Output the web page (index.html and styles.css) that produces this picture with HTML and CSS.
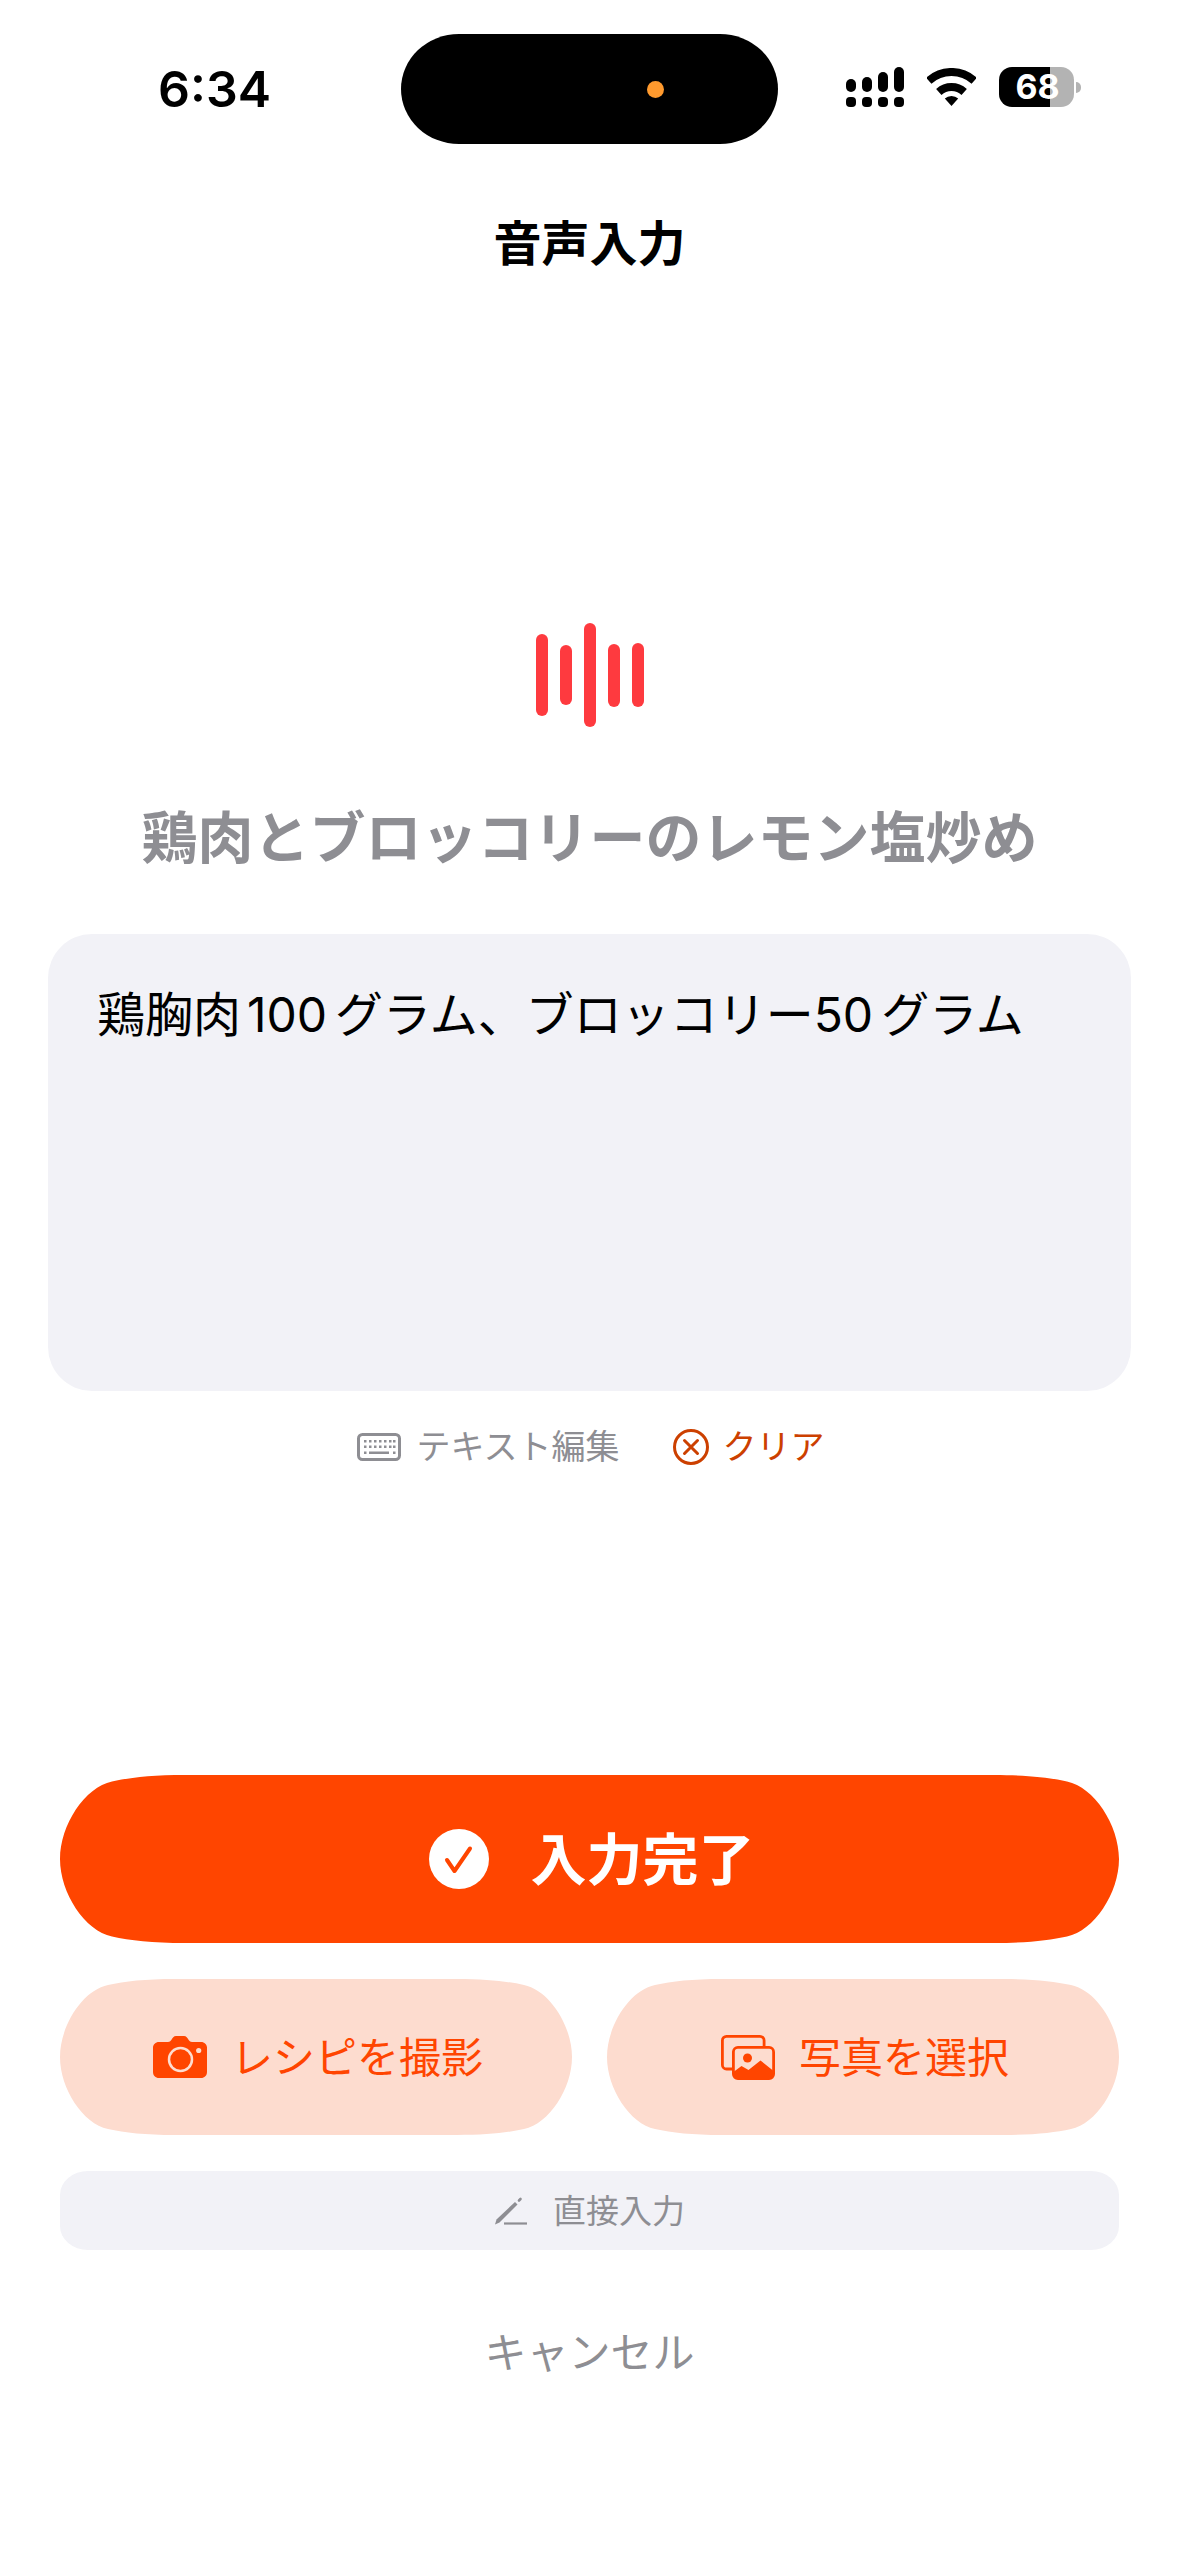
FILE: index.html
```html
<!DOCTYPE html>
<html lang="ja">
<head>
    <meta charset="UTF-8">
    <meta name="viewport" content="width=device-width, initial-scale=1.0">
    <title>音声入力</title>
    <link rel="stylesheet" href="styles.css">
</head>
<body>
    <div class="page">
        <div class="status-bar">
            <div class="time">6:34</div>
            <div class="island"><span class="island-dot"></span></div>
            <div class="status-icons">
                <div class="signal">
                    <span class="sig sig1"></span><span class="sig sig2"></span><span class="sig sig3"></span><span class="sig sig4"></span>
                    <span class="sig-dot"></span><span class="sig-dot"></span><span class="sig-dot"></span><span class="sig-dot"></span>
                </div>
                <svg class="wifi" viewBox="0 0 49 38" fill="none" stroke="#000" stroke-width="8">
                    <path d="M1.750 12.700A34 34 0 0 1 47.250 12.700"/>
                    <path d="M11.800 23.900A19 19 0 0 1 37.200 23.900"/>
                    <path d="M24.500 38L17.800 30.600A10 10 0 0 1 31.200 30.600Z" fill="#000" stroke="none"/>
                </svg>
                <div class="battery">
                    <div class="battery-body">68</div>
                    <span class="battery-nub"></span>
                </div>
            </div>
        </div>

        <h1 class="title">音声入力</h1>

        <div class="wave">
            <span class="bar bar1"></span>
            <span class="bar bar2"></span>
            <span class="bar bar3"></span>
            <span class="bar bar4"></span>
            <span class="bar bar5"></span>
        </div>

        <h2 class="recipe">鶏肉とブロッコリーのレモン塩炒め</h2>

        <div class="voice-box">鶏胸肉<span class="num num-first">100</span>グラム、ブロッコリー<span class="num">50</span>グラム</div>

        <div class="tools">
            <div class="tool">
                <svg class="kb-icon" viewBox="0 0 44 28" fill="#8e8e93">
                    <rect x="1.500" y="1.500" width="41" height="25" rx="4" fill="none" stroke="#8e8e93" stroke-width="3"/>
                    <g>
                        <rect x="7" y="7" width="2.500" height="2.500"/><rect x="12" y="7" width="2.500" height="2.500"/><rect x="17" y="7" width="2.500" height="2.500"/><rect x="22" y="7" width="2.500" height="2.500"/><rect x="27" y="7" width="2.500" height="2.500"/><rect x="32" y="7" width="2.500" height="2.500"/><rect x="36" y="7" width="2.500" height="2.500"/>
                        <rect x="7" y="12.500" width="2.500" height="2.500"/><rect x="12" y="12.500" width="2.500" height="2.500"/><rect x="17" y="12.500" width="2.500" height="2.500"/><rect x="22" y="12.500" width="2.500" height="2.500"/><rect x="27" y="12.500" width="2.500" height="2.500"/><rect x="32" y="12.500" width="2.500" height="2.500"/><rect x="36" y="12.500" width="2.500" height="2.500"/>
                        <rect x="7" y="18.500" width="2.500" height="2.500"/><rect x="12" y="18.500" width="20" height="2.500"/><rect x="36" y="18.500" width="2.500" height="2.500"/>
                    </g>
                </svg>
                <span>テキスト編集</span>
            </div>
            <div class="tool tool-clear">
                <svg class="clear-icon" viewBox="0 0 36 36" fill="none" stroke="#cc4000" stroke-width="3">
                    <circle cx="18" cy="18" r="16.500"/>
                    <path d="M11.500 11.500L24.500 24.500M24.500 11.500L11.500 24.500" stroke-linecap="round"/>
                </svg>
                <span>クリア</span>
            </div>
        </div>

        <div class="actions">
            <button class="btn-done">
                <svg class="check-icon" viewBox="0 0 60 60">
                    <circle cx="30" cy="30" r="30" fill="#fff"/>
                    <path d="M18 31L25.500 42L41 19.500" fill="none" stroke="#ff4500" stroke-width="4" stroke-linecap="round" stroke-linejoin="round"/>
                </svg>
                <span>入力完了</span>
            </button>

            <div class="btn-row">
                <button class="btn-soft">
                    <svg class="camera-icon" viewBox="0 0 54 42">
                        <path fill="#ff4500" d="M6 6h9c1.500 0 2.500-.8 3.300-2C19.500 2 20.800 0 23 0h8c2.200 0 3.500 2 4.700 4 .8 1.200 1.800 2 3.300 2h9c3.500 0 6 2.500 6 5.500V36c0 3.500-2.500 6-6 6H6c-3.500 0-6-2.500-6-6V11.500C0 8.500 2.500 6 6 6Z"/>
                        <circle cx="27.500" cy="23.500" r="11.500" fill="none" stroke="#fddccf" stroke-width="2.500"/>
                        <circle cx="45.700" cy="14.500" r="2.600" fill="#fddccf"/>
                    </svg>
                    <span>レシピを撮影</span>
                </button>
                <button class="btn-soft">
                    <svg class="photos-icon" viewBox="0 0 54 45" fill="none" stroke="#ff4500" stroke-width="2.800">
                        <path d="M11 34H5.500a4.100 4.100 0 0 1-4.100-4.100V5.500A4.100 4.100 0 0 1 5.500 1.400H39a4.100 4.100 0 0 1 4.100 4.100V11"/>
                        <rect x="12.400" y="12.400" width="40.200" height="31.200" rx="4.500"/>
                        <circle cx="26.500" cy="23" r="4.500" fill="#ff4500" stroke="none"/>
                        <path fill="#ff4500" stroke="none" d="M12.400 37L20.500 31L27.500 35L39.500 25.500L52.600 36V40a4 4 0 0 1-4 4H16.400a4 4 0 0 1-4-4Z"/>
                    </svg>
                    <span>写真を選択</span>
                </button>
            </div>

            <button class="btn-direct">
                <svg class="pen-icon" viewBox="0 0 33 28" fill="none" stroke="#8e8e93">
                    <path d="M1 27.500L2.500 22.500L21 5L23.500 7.500L5.500 25.500Z" fill="#8e8e93" stroke="none"/>
                    <path d="M10 26.500H33" stroke-width="2.200"/>
                    <path d="M25 3.500L26.500 2" stroke-width="2.600" stroke-linecap="round"/>
                </svg>
                <span>直接入力</span>
            </button>

            <div class="cancel">キャンセル</div>
        </div>
    </div>
</body>
</html>
```

FILE: styles.css
```css
* {
    box-sizing: border-box;
}
body {
    margin: 0;
    background: #fff;
    color: #000;
    font-family: Inter, "Noto Sans CJK JP", sans-serif;
}
button {
    border: none;
    font-family: inherit;
    padding: 0;
}
.page {
    display: flex;
    flex-direction: column;
    height: 2556px;
    padding-bottom: 173px;
}

/* status bar */
.status-bar {
    display: flex;
    align-items: center;
    height: 110px;
    margin-top: 34px;
    padding-left: 158px;
}
.time {
    width: 243px;
    font-size: 50px;
    font-weight: 600;
    line-height: 110px;
}
.island {
    display: flex;
    align-items: center;
    justify-content: flex-end;
    width: 377px;
    height: 110px;
    padding-right: 114px;
    background: #000;
    border-radius: 58px / 55px;
}
.island-dot {
    width: 17px;
    height: 17px;
    border-radius: 50%;
    background: #ff9a2e;
}
.status-icons {
    display: flex;
    align-items: center;
    gap: 23px;
    margin-left: 68px;
    margin-bottom: 4px;
}
.signal {
    display: grid;
    grid-template-columns: repeat(4, 10px);
    grid-template-rows: 25px 10px;
    column-gap: 6px;
    row-gap: 5px;
    align-items: end;
}
.sig {
    width: 10px;
    background: #000;
    border-radius: 5px;
}
.sig1 { height: 13px; }
.sig2 { height: 15px; }
.sig3 { height: 20px; }
.sig4 { height: 25px; }
.sig-dot {
    width: 10px;
    height: 10px;
    background: #000;
    border-radius: 4px;
}
.wifi {
    width: 49px;
    height: 38px;
}
.battery {
    display: flex;
    align-items: center;
    gap: 2px;
}
.battery-body {
    width: 75px;
    height: 40px;
    border-radius: 13px;
    background: linear-gradient(to right, #000 51px, #b3b3b3 51px);
    color: #fff;
    font-size: 34px;
    font-weight: 700;
    line-height: 40px;
    text-align: center;
    padding-left: 2px;
}
.battery-nub {
    width: 5px;
    height: 11px;
    background: #b3b3b3;
    border-radius: 0 6px 6px 0;
}

/* main content */
.title {
    margin: 70px 0 0;
    font-size: 48px;
    font-weight: 700;
    line-height: 60px;
    text-align: center;
}
.wave {
    display: flex;
    align-items: center;
    justify-content: center;
    gap: 12px;
    height: 104px;
    margin-top: 349px;
}
.bar {
    width: 12px;
    border-radius: 6px;
    background: #fe3a3f;
}
.bar1 { height: 82px; }
.bar2 { height: 60px; }
.bar3 { height: 104px; }
.bar4 { height: 63px; }
.bar5 { height: 64px; }
.recipe {
    margin: 76px 0 0;
    color: #8e8e93;
    font-size: 56px;
    font-weight: 700;
    line-height: 70px;
    text-align: center;
}
.voice-box {
    height: 457px;
    margin: 61px 48px 0;
    padding: 46px 49px;
    background: #f2f2f7;
    border-radius: 44px;
    font-size: 48px;
    line-height: 70px;
}
.num {
    margin-right: 8px;
}
.num-first {
    margin-left: 6px;
}
.tools {
    display: flex;
    justify-content: center;
    gap: 54px;
    margin-top: 36px;
    padding-left: 2px;
    color: #8e8e93;
    font-size: 34px;
    line-height: 40px;
}
.tool {
    display: flex;
    align-items: center;
    gap: 16px;
}
.tool-clear {
    gap: 13px;
    color: #cc4000;
}
.kb-icon {
    width: 44px;
    height: 28px;
}
.clear-icon {
    width: 36px;
    height: 36px;
}

/* buttons */
.actions {
    display: flex;
    flex-direction: column;
    margin-top: auto;
    padding: 0 60px;
}
.btn-done {
    display: flex;
    align-items: center;
    justify-content: center;
    gap: 42px;
    height: 168px;
    padding-left: 4px;
    background: #ff4500;
    clip-path: path("M125 0H934C967 0 989 2.500 1007 6.500C1034 12 1059 50 1059 84C1059 118 1034 156 1007 161.500C989 165.500 967 168 934 168H125C92 168 70 165.500 52 161.500C25 156 0 118 0 84C0 50 25 12 52 6.500C70 2.500 92 0 125 0Z");
    color: #fff;
    font-size: 56px;
    font-weight: 700;
}
.btn-done span {
    margin-bottom: 8px;
}
.check-icon {
    width: 60px;
    height: 60px;
}
.btn-row {
    display: flex;
    gap: 35px;
    margin-top: 36px;
}
.btn-soft {
    display: flex;
    flex: 1;
    align-items: center;
    justify-content: center;
    gap: 24px;
    height: 156px;
    padding-left: 4px;
    background: #fddccf;
    clip-path: path("M115 0H397C427 0 447 2.300 464 6C489 11 512 46.400 512 78C512 109.600 489 145 464 150C447 153.700 427 156 397 156H115C85 156 65 153.700 48 150C23 145 0 109.600 0 78C0 46.400 23 11 48 6C65 2.300 85 0 115 0Z");
    color: #ff4500;
    font-size: 42px;
}
.btn-soft span {
    margin-bottom: 6px;
}
.camera-icon {
    width: 54px;
    height: 42px;
}
.photos-icon {
    width: 54px;
    height: 45px;
}
.btn-direct {
    display: flex;
    align-items: center;
    justify-content: center;
    gap: 26px;
    height: 79px;
    margin-top: 36px;
    background: #f2f2f7;
    border-radius: 28px / 24px;
    color: #8e8e93;
    font-size: 33px;
}
.btn-direct span {
    margin-bottom: 4px;
}
.pen-icon {
    width: 33px;
    height: 28px;
}
.cancel {
    margin-top: 73px;
    color: #8e8e93;
    font-size: 42px;
    line-height: 60px;
    text-align: center;
}
```
